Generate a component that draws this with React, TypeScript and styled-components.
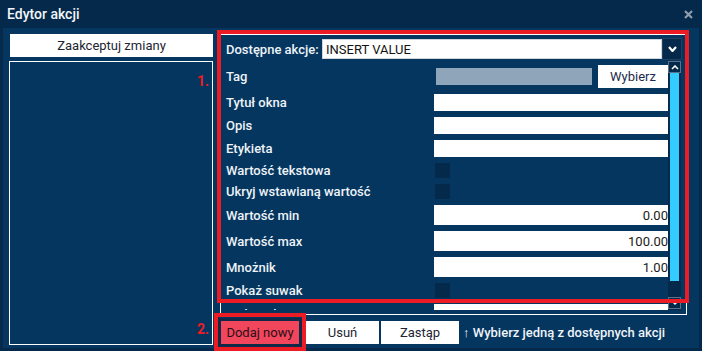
import React from 'react'
import styled, { createGlobalStyle } from 'styled-components'

const GlobalStyle = createGlobalStyle`
  html, body {
    margin: 0;
    padding: 0;
  }
  body {
    background: #05294b;
    font-family: Roboto, "Liberation Sans", sans-serif;
  }
  * { box-sizing: border-box; }
`

const Window = styled.div`
  position: relative;
  width: 702px;
  height: 351px;
  display: flex;
  flex-direction: column;
  background: #05294b;
  overflow: hidden;
`

const TitleBar = styled.div`
  height: 28px;
  flex: none;
  display: flex;
  align-items: center;
  justify-content: space-between;
  padding: 0 9px 0 7px;
  color: #f2f5f9;
  font-size: 14px;
  font-weight: 500;
`

const Content = styled.div`
  flex: 1;
  margin: 0 3px 3px;
  padding: 6px 0 3px 6px;
  background: #04365f;
  display: flex;
  gap: 7px;
`

const LeftColumn = styled.div`
  width: 204px;
  display: flex;
  flex-direction: column;
  gap: 4px;
`

const WhiteButton = styled.button<{ $w?: number }>`
  height: 23px;
  width: ${p => (p.$w ? `${p.$w}px` : 'auto')};
  flex: none;
  border: none;
  padding: 0;
  background: #ffffff;
  color: #1d2533;
  font-family: Roboto, "Liberation Sans", sans-serif;
  font-size: 13px;
`

const AcceptButton = styled(WhiteButton)`
  margin-left: 1px;
  width: 203px;
`

const ListBox = styled.div`
  flex: 1;
  border: 1px solid #ffffff;
`

const RightColumn = styled.div`
  width: 467px;
  display: flex;
  flex-direction: column;
`

const Panel = styled.div`
  height: 281px;
  border: 1px solid #ffffff;
  padding: 3px 0 4px 0;
  display: flex;
  flex-direction: column;
`

const SelectRow = styled.div`
  height: 22px;
  display: flex;
  align-items: center;
  padding: 0 4px 0 5px;
`

const Label = styled.div<{ $w?: number }>`
  width: ${p => p.$w ?? 208}px;
  flex: none;
  color: #eef3f8;
  font-size: 13px;
  font-weight: 500;
  white-space: nowrap;
`

const SelectBox = styled.div`
  flex: 1;
  height: 20px;
  background: #ffffff;
  border: 1px solid #d0d6dc;
  padding-left: 3px;
  display: flex;
  align-items: center;
  color: #111;
  font-size: 13px;
`

const SelectArrow = styled.div`
  width: 20px;
  height: 22px;
  background: #05294b;
  border: 1px solid #1e3f60;
  display: flex;
  align-items: center;
  justify-content: center;
`

const ListArea = styled.div`
  margin-top: 1px;
  height: 249px;
  display: flex;
  overflow: hidden;
`

const Rows = styled.div`
  flex: 1;
  padding: 4px 0 0 5px;
  display: flex;
  flex-direction: column;
  gap: 6px;
  overflow: hidden;
`

const Row = styled.div<{ $h: number }>`
  height: ${p => p.$h}px;
  flex: none;
  display: flex;
  align-items: center;
`

const Field = styled.input<{ $align?: string }>`
  flex: 1;
  min-width: 0;
  height: 100%;
  border: none;
  outline: none;
  padding: 0;
  background: #ffffff;
  color: #1a1a1a;
  text-align: ${p => p.$align ?? 'left'};
  font-family: Roboto, "Liberation Sans", sans-serif;
  font-size: 13px;
`

const TagField = styled.div`
  width: 156px;
  height: 17px;
  margin-left: 2px;
  background: #8fa6ba;
`

const PickButton = styled(WhiteButton)`
  margin-left: 6px;
  width: 70px;
  color: #1c2b4a;
`

const Check = styled.span`
  width: 15px;
  height: 15px;
  margin-left: 1px;
  background: #05294b;
`

const Scrollbar = styled.div`
  width: 13px;
  margin-right: 5px;
  display: flex;
  flex-direction: column;
  background: #05294b;
`

const ScrollButton = styled.div`
  height: 12px;
  flex: none;
  border: 1px solid #5d7085;
  display: flex;
  align-items: center;
  justify-content: center;
`

const Thumb = styled.div`
  height: 208px;
  flex: none;
  margin: 0 2px;
  background: #33ccff;
`

const ScrollRest = styled.div`
  height: 16px;
  flex: none;
`

const ButtonRow = styled.div`
  margin-top: 6px;
  display: flex;
  align-items: center;
  gap: 2px;
  padding-left: 1px;
`

const AddButton = styled(WhiteButton)`
  width: 78px;
  margin-right: 5px;
  background: #f2465c;
  color: #2a1018;
  box-shadow: 0 0 0 3px #0f2a48;
`

const Hint = styled.div`
  margin-left: 2px;
  color: #eef3f8;
  font-size: 13px;
  font-weight: 500;
  white-space: nowrap;
`

const Marker = styled.div<{ $top: number }>`
  position: absolute;
  left: 197px;
  top: ${p => p.$top}px;
  line-height: 20px;
  color: #ed1c24;
  font-size: 14px;
  font-weight: 700;
`

const Highlight = styled.div<{ $x: number; $y: number; $w: number; $h: number }>`
  position: absolute;
  left: ${p => p.$x}px;
  top: ${p => p.$y}px;
  width: ${p => p.$w}px;
  height: ${p => p.$h}px;
  border: 4px solid #ed1c24;
  pointer-events: none;
`

type Kind = 'tag' | 'text' | 'check' | 'number'

const rows: { label: string; kind: Kind; value?: string }[] = [
  { label: 'Tag', kind: 'tag' },
  { label: 'Tytuł okna', kind: 'text' },
  { label: 'Opis', kind: 'text' },
  { label: 'Etykieta', kind: 'text' },
  { label: 'Wartość tekstowa', kind: 'check' },
  { label: 'Ukryj wstawianą wartość', kind: 'check' },
  { label: 'Wartość min', kind: 'number', value: '0.00' },
  { label: 'Wartość max', kind: 'number', value: '100.00' },
  { label: 'Mnożnik', kind: 'number', value: '1.00' },
  { label: 'Pokaż suwak', kind: 'check' },
  { label: 'Jednostka', kind: 'number', value: '' },
]

const heights: Record<Kind, number> = { tag: 23, text: 17, check: 15, number: 20 }

const Chevron = ({ up, w = 10, h = 6, sw = 2 }: { up?: boolean; w?: number; h?: number; sw?: number }) => (
  <svg width={w} height={h} viewBox={`0 0 ${w} ${h}`}>
    <polyline
      points={up ? `1,${h - 1} ${w / 2},1 ${w - 1},${h - 1}` : `1,1 ${w / 2},${h - 1} ${w - 1},1`}
      fill="none"
      stroke="#ffffff"
      strokeWidth={sw}
    />
  </svg>
)

export default function App() {
  return (
    <Window>
      <GlobalStyle />
      <TitleBar>
        <span>Edytor akcji</span>
        <svg width="9" height="9" viewBox="0 0 9 9">
          <path d="M1 1 L8 8 M8 1 L1 8" stroke="#8e9cab" strokeWidth="2.2" />
        </svg>
      </TitleBar>
      <Content>
        <LeftColumn>
          <AcceptButton>Zaakceptuj zmiany</AcceptButton>
          <ListBox />
        </LeftColumn>
        <RightColumn>
          <Panel>
            <SelectRow>
              <Label $w={96}>Dostępne akcje:</Label>
              <SelectBox>INSERT VALUE</SelectBox>
              <SelectArrow>
                <Chevron w={9} h={6} sw={2.2} />
              </SelectArrow>
            </SelectRow>
            <ListArea>
              <Rows>
                {rows.map(r => (
                  <Row key={r.label} $h={heights[r.kind]}>
                    <Label>{r.label}</Label>
                    {r.kind === 'tag' && (
                      <>
                        <TagField />
                        <PickButton>Wybierz</PickButton>
                      </>
                    )}
                    {r.kind === 'text' && <Field readOnly value="" />}
                    {r.kind === 'number' && <Field readOnly $align="right" value={r.value} />}
                    {r.kind === 'check' && <Check />}
                  </Row>
                ))}
              </Rows>
              <Scrollbar>
                <ScrollButton>
                  <Chevron up w={8} h={5} sw={1.6} />
                </ScrollButton>
                <Thumb />
                <ScrollRest />
                <ScrollButton>
                  <Chevron w={6} h={4} sw={1.4} />
                </ScrollButton>
              </Scrollbar>
            </ListArea>
          </Panel>
          <ButtonRow>
            <AddButton>Dodaj nowy</AddButton>
            <WhiteButton $w={73}>Usuń</WhiteButton>
            <WhiteButton $w={78}>Zastąp</WhiteButton>
            <Hint>↑ Wybierz jedną z dostępnych akcji</Hint>
          </ButtonRow>
        </RightColumn>
      </Content>
      <Marker $top={71}>1.</Marker>
      <Marker $top={319}>2.</Marker>
      <Highlight $x={217} $y={30} $w={472} $h={273} />
      <Highlight $x={214} $y={313} $w={92} $h={38} />
    </Window>
  )
}
